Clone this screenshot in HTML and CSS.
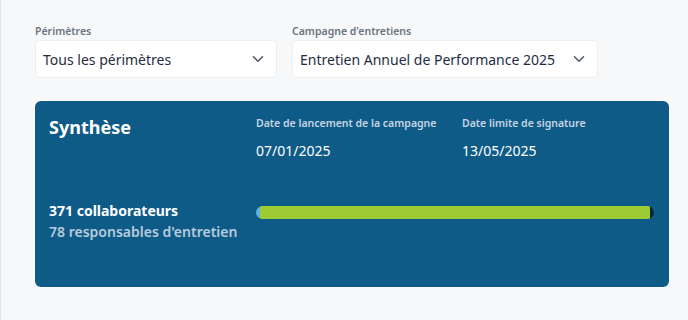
FILE: index.html
```html
<!DOCTYPE html>
<html lang="fr">
<head>
<meta charset="utf-8">
<link rel="stylesheet" href="styles.css">
</head>
<body>
<div class="page">
  <div class="filters">
    <div class="field field-1">
      <label class="field-label">Périmètres</label>
      <div class="select">
        <span>Tous les périmètres</span>
        <svg class="chev" width="12" height="8" viewBox="0 0 12 8"><path d="M1.5 1.8 L6 6.2 L10.5 1.8" fill="none" stroke="#4a5563" stroke-width="1.5" stroke-linecap="round" stroke-linejoin="round"/></svg>
      </div>
    </div>
    <div class="field field-2">
      <label class="field-label">Campagne d'entretiens</label>
      <div class="select">
        <span>Entretien Annuel de Performance 2025</span>
        <svg class="chev" width="12" height="8" viewBox="0 0 12 8"><path d="M1.5 1.8 L6 6.2 L10.5 1.8" fill="none" stroke="#4a5563" stroke-width="1.5" stroke-linecap="round" stroke-linejoin="round"/></svg>
      </div>
    </div>
  </div>

  <section class="card">
    <h2 class="card-title">Synthèse</h2>
    <div class="date">
      <div class="date-label">Date de lancement de la campagne</div>
      <div class="date-value">07/01/2025</div>
    </div>
    <div class="date">
      <div class="date-label">Date limite de signature</div>
      <div class="date-value">13/05/2025</div>
    </div>
    <div class="counts">
      <div class="count-main">371 collaborateurs</div>
      <div class="count-sub">78 responsables d'entretien</div>
    </div>
    <div class="bar">
      <div class="seg seg-a" style="width:1%"></div>
      <div class="seg seg-b" style="width:98%"></div>
      <div class="seg seg-c" style="width:1%"></div>
    </div>
  </section>
</div>
</body>
</html>
```

FILE: styles.css
```css
* { box-sizing: border-box; }
html, body { margin: 0; padding: 0; }
body {
  width: 688px;
  height: 320px;
  background: #f7f8f9;
  font-family: "Noto Sans", "Open Sans", sans-serif;
  overflow: hidden;
}
.page {
  height: 320px;
  border-left: 1px solid #e4e6e9;
  padding: 24px 19px 0 34px;
}
.filters {
  display: flex;
  gap: 15px;
}
.field { display: flex; flex-direction: column; }
.field-1 { width: 242px; }
.field-2 { width: 306px; }
.field-label {
  font-size: 10.5px;
  line-height: 15px;
  font-weight: 600;
  color: #6b7480;
  margin-bottom: 1px;
}
.select {
  height: 38px;
  background: #fff;
  border: 1px solid #eceef1;
  border-radius: 4px;
  display: flex;
  align-items: center;
  justify-content: space-between;
  padding: 0 12px 0 7px;
  font-size: 14px;
  color: #1f2d3f;
}
.chev { display: block; }

.card {
  margin-top: 23px;
  height: 186px;
  background: #0f5b87;
  border-radius: 6px;
  padding: 14px 15px 0 14px;
  display: grid;
  grid-template-columns: 207px 206px 1fr;
  grid-template-rows: 46px auto;
  row-gap: 39px;
  color: #fff;
}
.card-title {
  margin: 0;
  font-size: 18px;
  line-height: 24px;
  font-weight: 700;
}
.date-label {
  font-size: 10.5px;
  line-height: 15px;
  font-weight: 600;
  color: #c6d5e2;
  margin-top: 1px;
}
.date-value {
  font-size: 14px;
  line-height: 20px;
  margin-top: 10px;
}
.counts { font-size: 14px; line-height: 21px; }
.count-main { font-weight: 700; }
.count-sub { font-weight: 600; color: #b7cbdd; }
.bar {
  grid-column: 2 / 4;
  margin-top: 6px;
  height: 13px;
  display: flex;
  border-radius: 7px;
  overflow: hidden;
}
.seg { height: 100%; }
.seg-a { background: #5fb3e0; }
.seg-b { background: #9ccb33; }
.seg-c { background: #0d2538; }
```
